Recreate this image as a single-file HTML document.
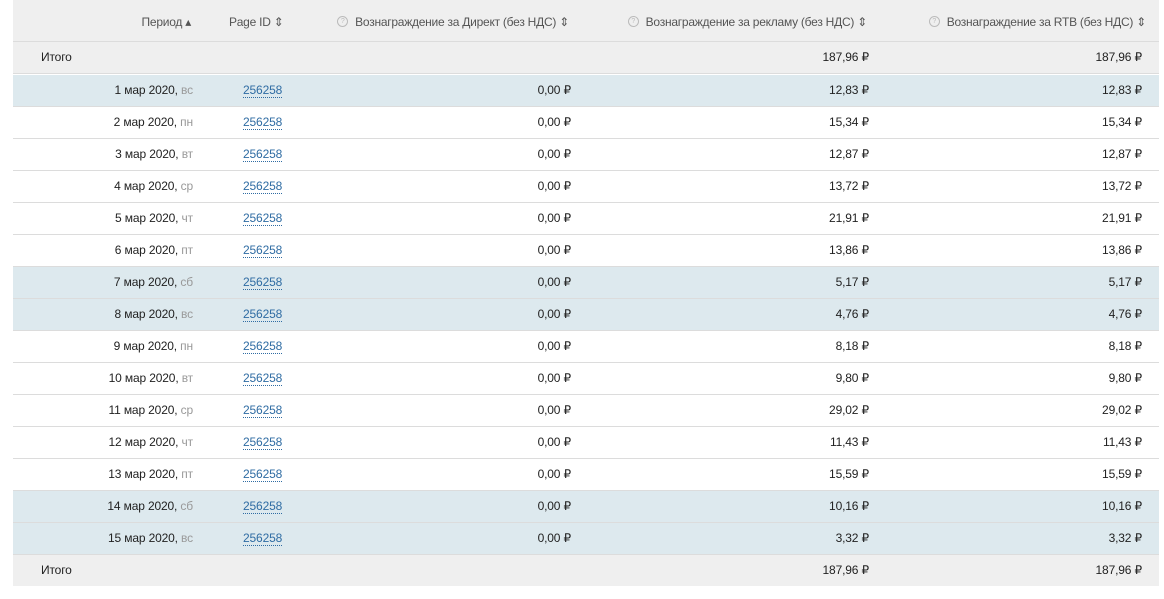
<!DOCTYPE html>
<html><head><meta charset="utf-8"><style>
body{margin:0;background:#fff;font-family:"Liberation Sans",Arial,sans-serif;font-size:12px;color:#222;}
.t{position:absolute;left:13px;width:1146px;top:0;}
.r{position:absolute;left:0;width:1146px;height:31px;border-bottom:1px solid #dcdcdc;line-height:31px;letter-spacing:-0.15px;}
.r span{position:absolute;white-space:nowrap;}
.h{background:#efefef;color:#555;height:41px;line-height:44px;letter-spacing:-0.25px;}
.g{background:#efefef;}
.b{background:#dde9ee;}
.p{right:966px;text-align:right;}
.d{color:#999;}
.id{left:230px;color:#2f6ca3;border-bottom:1px dotted #2f6ca3;line-height:13px;top:9px;}
.c1{right:588px}.c2{right:290px}.c3{right:17px}
.q{display:inline-block;width:9px;height:9px;border:1px solid #bbb;border-radius:50%;font-size:7px;line-height:9px;text-align:center;color:#bbb;vertical-align:3px;margin-right:7px;font-style:normal;}
</style></head><body>
<div class="t">
<div class="r h" style="top:0">
<span style="right:968px">Период ▴</span>
<span style="left:216px">Page ID ⇕</span>
<span style="right:590px"><i class="q">?</i>Вознаграждение за Директ (без НДС) ⇕</span>
<span style="right:292px"><i class="q">?</i>Вознаграждение за рекламу (без НДС) ⇕</span>
<span style="right:13px"><i class="q">?</i>Вознаграждение за RTB (без НДС) ⇕</span>
</div>
<div class="r g" style="top:42px"><span style="left:28px">Итого</span><span class="c2">187,96 ₽</span><span class="c3">187,96 ₽</span></div>
<div id="rows"></div>
<div class="r g" style="top:555px;border:none"><span style="left:28px">Итого</span><span class="c2">187,96 ₽</span><span class="c3">187,96 ₽</span></div>
</div>
<script>
var d=[["1","вс","12,83",1],["2","пн","15,34"],["3","вт","12,87"],["4","ср","13,72"],["5","чт","21,91"],["6","пт","13,86"],["7","сб","5,17",1],["8","вс","4,76",1],["9","пн","8,18"],["10","вт","9,80"],["11","ср","29,02"],["12","чт","11,43"],["13","пт","15,59"],["14","сб","10,16",1],["15","вс","3,32",1]];
var h="";d.forEach(function(x,i){h+='<div class="r'+(x[3]?' b':'')+'" style="top:'+(75+i*32)+'px"><span class="p">'+x[0]+' мар 2020, <span class="d" style="position:static">'+x[1]+'</span></span><span class="id">256258</span><span class="c1">0,00 ₽</span><span class="c2">'+x[2]+' ₽</span><span class="c3">'+x[2]+' ₽</span></div>';});
document.getElementById("rows").outerHTML=h;
</script>
</body></html>
